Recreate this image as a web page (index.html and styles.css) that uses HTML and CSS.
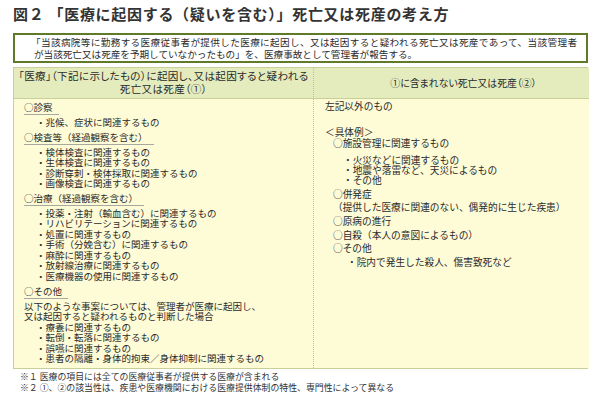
FILE: index.html
```html
<!DOCTYPE html>
<html lang="ja">
<head>
<meta charset="utf-8">
<link rel="stylesheet" href="styles.css">
</head>
<body>
<div class="page">
  <h1 class="title">図２ 「医療に起因する（疑いを含む）」死亡又は死産の考え方</h1>
  <div class="quote">
    <span class="q1">「当該病院等に勤務する医療従事者が提供した医療に起因し、又は起因すると疑われる死亡又は死産であって、当該管理者</span>
    <span class="q2">が当該死亡又は死産を予期していなかったもの」を、医療事故として管理者が報告する。</span>
  </div>
  <div class="table">
    <div class="th th-left">「医療」（下記に示したもの）に起因し、又は起因すると疑われる<br>死亡又は死産（①）</div>
    <div class="th th-right">①に含まれない死亡又は死産（②）</div>
    <div class="td td-left">
      <div class="h"><span>○診察</span></div>
      <ul class="items">
        <li>・兆候、症状に関連するもの</li>
      </ul>
      <div class="h"><span>○検査等（経過観察を含む）</span></div>
      <ul class="items">
        <li>・検体検査に関連するもの</li>
        <li>・生体検査に関連するもの</li>
        <li>・診断穿刺・検体採取に関連するもの</li>
        <li>・画像検査に関連するもの</li>
      </ul>
      <div class="h"><span>○治療（経過観察を含む）</span></div>
      <ul class="items">
        <li>・投薬・注射（輸血含む）に関連するもの</li>
        <li>・リハビリテーションに関連するもの</li>
        <li>・処置に関連するもの</li>
        <li>・手術（分娩含む）に関連するもの</li>
        <li>・麻酔に関連するもの</li>
        <li>・放射線治療に関連するもの</li>
        <li>・医療機器の使用に関連するもの</li>
      </ul>
      <div class="h"><span>○その他</span></div>
      <p class="note">以下のような事案については、管理者が医療に起因し、<br>又は起因すると疑われるものと判断した場合</p>
      <ul class="items">
        <li>・療養に関連するもの</li>
        <li>・転倒・転落に関連するもの</li>
        <li>・誤嚥に関連するもの</li>
        <li>・患者の隔離・身体的拘束／身体抑制に関連するもの</li>
      </ul>
    </div>
    <div class="td td-right">
      <p class="r-lead">左記以外のもの</p>
      <p class="r-ex">＜具体例＞</p>
      <p class="r-o r-first">○施設管理に関連するもの</p>
      <ul class="r-items">
        <li>・火災などに関連するもの</li>
        <li>・地震や落雷など、天災によるもの</li>
        <li>・その他</li>
      </ul>
      <p class="r-o">○併発症</p>
      <p class="r-o">（提供した医療に関連のない、偶発的に生じた疾患）</p>
      <p class="r-o">○原病の進行</p>
      <p class="r-o">○自殺（本人の意図によるもの）</p>
      <p class="r-o">○その他</p>
      <ul class="r-items r-last">
        <li>・院内で発生した殺人、傷害致死など</li>
      </ul>
    </div>
  </div>
  <div class="notes">
    <p>※１ 医療の項目には全ての医療従事者が提供する医療が含まれる</p>
    <p>※２ ①、②の該当性は、疾患や医療機関における医療提供体制の特性、専門性によって異なる</p>
  </div>
</div>
</body>
</html>
```

FILE: styles.css
```css
* { box-sizing: border-box; }
body {
  margin: 0;
  background: #ffffff;
  font-family: "Noto Sans CJK JP", "Noto Sans", sans-serif;
  color: #2b2b2b;
}
.page {
  width: 600px;
  padding: 5px 12px 0 13px;
}
.title {
  margin: 0 0 10px 0;
  font-size: 15px;
  line-height: 18px;
  font-weight: bold;
  color: #333333;
  letter-spacing: 0.7px;
}
.quote {
  height: 30px;
  border: 2px solid #5f7b27;
  padding: 1px 9px 0 16px;
  font-size: 9.6px;
  line-height: 12px;
}
.q1 {
  display: block;
  text-align: justify;
  text-align-last: justify;
  white-space: nowrap;
}
.q2 {
  display: block;
  padding-left: 3px;
}
.table {
  margin-top: 4px;
  display: grid;
  grid-template-columns: 299px 276px;
  grid-template-rows: 31px auto;
  border: 1px solid #c8cf98;
  font-size: 9.5px;
}
.th {
  background: #e4ecbe;
  border-bottom: 1px solid #c8cf98;
  display: flex;
  align-items: center;
  justify-content: center;
  text-align: center;
  line-height: 12.5px;
  color: #2b2b2b;
  font-feature-settings: "palt";
}
.th-left {
  padding-bottom: 1px;
  font-size: 10.6px;
  letter-spacing: 0.3px;
}
.th-right {
  border-left: 1px dotted #b9c08a;
  font-size: 9.9px;
  padding-left: 24px;
}
.td {
  background: #fefbd7;
}
.td-left {
  padding: 2px 0 1px 10px;
  height: 269px;
}
.td-right {
  border-left: 1px dotted #b9c08a;
  padding: 1px 0 0 11px;
  font-size: 9.7px;
}
.h {
  margin: 3px 0 2px 0;
  line-height: 12px;
}
.h:first-child { margin-top: 0; }
.h span {
  display: inline-block;
  padding: 0 6px 1px 0;
  border-bottom: 1px solid #a8a8a0;
}
ul { list-style: none; margin: 0; padding: 0; }
.items { padding-left: 12px; line-height: 10.55px; }
.note {
  margin: 1px 0 0 0;
  line-height: 10.6px;
}
p { margin: 0; }
.r-lead { line-height: 12px; }
.r-ex { margin-top: 14px; line-height: 12px; }
.r-o { padding-left: 8px; line-height: 13.7px; }
.r-first { line-height: 10px; margin-top: 0; }
.r-items {
  padding-left: 18px;
  line-height: 10.2px;
  margin: 7px 0 2px 0;
}
.r-last { padding-left: 22px; margin-top: 1px; }
.notes {
  margin-top: 2px;
  padding-left: 7px;
  font-size: 8.9px;
  line-height: 11px;
  color: #333;
}
```
